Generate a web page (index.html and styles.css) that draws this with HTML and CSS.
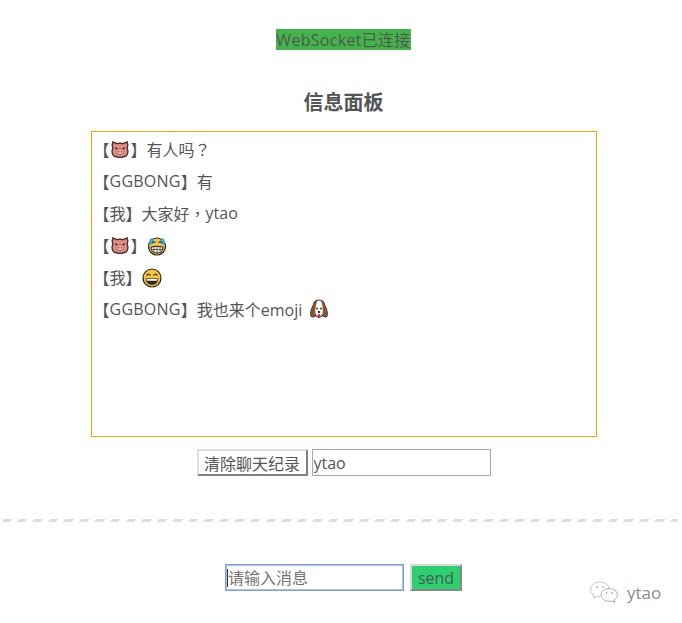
FILE: index.html
```html
<!DOCTYPE html>
<html lang="en">
<head>
    <meta charset="UTF-8">
    <title>WebSocket</title>
    <link rel="stylesheet" href="styles.css">
</head>
<body>
    <svg class="defs" width="0" height="0">
        <defs>
            <symbol id="pig" viewBox="0 0 20 20">
                <g transform="translate(1 1) scale(.9)">
                    <path d="M2 1 L6.500 3 Q10 2 13.500 3 L18 1 Q19.500 5 18 8 Q20 12.500 17 16.500 Q10 20 3 16.500 Q0 12.500 2 8 Q0.500 5 2 1Z" fill="#ea8a80" stroke="#3c3030" stroke-width="1.500"/>
                    <ellipse cx="10" cy="12" rx="4.500" ry="3" fill="#f6b8b0" stroke="#8a4a44" stroke-width=".8"/>
                    <circle cx="8.400" cy="12" r=".9" fill="#6b2d2d"/>
                    <circle cx="11.600" cy="12" r=".9" fill="#6b2d2d"/>
                    <circle cx="5.800" cy="8" r="1.100" fill="#222"/>
                    <circle cx="14.200" cy="8" r="1.100" fill="#222"/>
                </g>
            </symbol>
            <symbol id="tears" viewBox="0 0 20 20">
                <circle cx="10" cy="10.500" r="8.500" fill="#f5c33b" stroke="#222" stroke-width="1.200"/>
                <path d="M4 11 Q10 9.500 16 11 Q16 17 10 17 Q4 17 4 11Z" fill="#fff" stroke="#222"/>
                <path d="M7 10.500V16.500M10 10V17M13 10.500V16.500M4.500 13.500H15.500" stroke="#222" stroke-width=".7"/>
                <path d="M3 9 Q1 5 4 2 L8 6 Q6 8 3 9ZM17 9 Q19 5 16 2 L12 6 Q14 8 17 9Z" fill="#35a9e0"/>
                <path d="M5 6.500 Q7 5 8.500 6.500M11.500 6.500 Q13 5 15 6.500" fill="none" stroke="#222" stroke-width="1"/>
            </symbol>
            <symbol id="grin" viewBox="0 0 20 20">
                <circle cx="10" cy="10" r="9" fill="#f5c33b" stroke="#222" stroke-width="1.200"/>
                <path d="M4.500 7.500 Q6.500 5 8.500 7.500M11.500 7.500 Q13.500 5 15.500 7.500" fill="none" stroke="#222" stroke-width="1.200"/>
                <path d="M4 10.500 H16 Q15.500 16.500 10 16.500 Q4.500 16.500 4 10.500Z" fill="#3a2020" stroke="#222" stroke-width=".6"/>
                <path d="M4.500 10.800 H15.500 L15 12.800 H5Z" fill="#fff"/>
            </symbol>
            <symbol id="dog" viewBox="0 0 20 20">
                <path d="M10 1 Q15 1 16 7 Q19 12 18 17 Q15 19 13.500 16 Q12 18.500 10 18.500 Q8 18.500 6.500 16 Q5 19 2 17 Q1 12 4 7 Q5 1 10 1Z" fill="#fff" stroke="#222" stroke-width="1.100"/>
                <path d="M8.500 1.500 Q4.500 2 4 7 Q1 12 2.200 16.800 Q5 18.500 6.500 15 Q5.500 9 8.500 1.500Z" fill="#8a5230"/>
                <path d="M12 1.500 Q15.500 2 16 7 Q19 12 17.800 16.800 Q15 18.500 13.500 15 Q14.500 9 12 1.500Z" fill="#8a5230"/>
                <circle cx="8" cy="9.500" r=".9" fill="#222"/>
                <circle cx="12" cy="9.500" r=".9" fill="#222"/>
                <ellipse cx="10" cy="13" rx="1.300" ry="1" fill="#222"/>
                <ellipse cx="10" cy="16.500" rx="1.500" ry="1.500" fill="#d8232a"/>
            </symbol>
        </defs>
    </svg>

    <div class="status-row">
        <span class="status">WebSocket已连接</span>
    </div>
    <h3 class="title">信息面板</h3>
    <div class="panel">
        <p class="msg">【<svg class="emoji"><use href="#pig"/></svg>】有人吗<span class="punct">？</span></p>
        <p class="msg">【<span class="sender">GGBONG</span>】有</p>
        <p class="msg">【我】大家好<span class="punct">，</span>ytao</p>
        <p class="msg">【<svg class="emoji"><use href="#pig"/></svg>】<svg class="emoji"><use href="#tears"/></svg></p>
        <p class="msg">【我】<svg class="emoji"><use href="#grin"/></svg></p>
        <p class="msg">【<span class="sender">GGBONG</span>】我也来个emoji <svg class="emoji dog"><use href="#dog"/></svg></p>
    </div>
    <div class="controls">
        <button class="clear-btn">清除聊天纪录</button>
        <input class="name-input" type="text" value="ytao">
    </div>
    <div class="divider"></div>
    <div class="send-row">
        <span class="msg-wrap">
            <input class="msg-input" type="text" placeholder="请输入消息">
        </span>
        <button class="send-btn">send</button>
    </div>

    <div class="watermark">
        <svg class="wechat" viewBox="0 0 32 24">
            <path d="M11 2 C5.500 2 1.500 5.500 1.500 9.500 C1.500 12 3 14 5 15.300 L4.200 18 L7.500 16.400 C8.500 16.700 9.500 16.800 11 16.800" fill="none" stroke="#c4c4c4" stroke-width="1"/>
            <path d="M11 2 C15.500 2 19.500 4.500 20.300 8" fill="none" stroke="#c4c4c4" stroke-width="1"/>
            <path d="M20 8.500 C15.500 8.500 12 11.500 12 15 C12 18.500 15.500 21.300 20 21.300 C21 21.300 22 21.200 23 20.800 L26 22.500 L25.300 19.700 C27.200 18.500 28.500 16.800 28.500 15 C28.500 11.500 24.800 8.500 20 8.500Z" fill="none" stroke="#aaa" stroke-width="1"/>
            <circle cx="8" cy="7" r="1" fill="#bbb"/>
            <circle cx="14" cy="7" r="1" fill="#bbb"/>
            <circle cx="17.500" cy="13" r=".9" fill="#aaa"/>
            <circle cx="23" cy="13" r=".9" fill="#aaa"/>
        </svg>
        <span>ytao</span>
    </div>
</body>
</html>
```

FILE: styles.css
```css
body {
    font-family: "Open Sans", "Noto Sans CJK SC", sans-serif;
    font-size: 16px;
    color: #555;
    background-color: #fff;
    margin: 0;
    padding: 0 0 0 5px;
    text-align: center;
}
.defs {
    display: block;
    height: 0;
}
.status-row {
    padding-top: 29px;
    height: 21px;
}
.status {
    display: inline-block;
    background-color: #41b54a;
    width: 135px;
    height: 21px;
    line-height: 22px;
    white-space: nowrap;
    letter-spacing: 0.3px;
    vertical-align: top;
}
.title {
    font-size: 20px;
    line-height: 26px;
    font-weight: bold;
    margin: 40px 0 15px;
}
.panel {
    box-sizing: border-box;
    width: 506px;
    height: 306px;
    margin: 0 auto;
    padding: 1px 2px;
    border: 1px solid orange;
    text-align: left;
}
.msg {
    display: flex;
    align-items: center;
    height: 32px;
    margin: 0;
    white-space: pre;
}
.sender {
    letter-spacing: .25px;
}
.punct {
    font-family: "Noto Sans CJK TC", sans-serif;
}
.emoji {
    width: 20px;
    height: 20px;
    margin: 2px .5px 0;
}
.dog {
    margin-left: 3px;
    margin-top: 0;
}
.controls {
    display: flex;
    justify-content: center;
    gap: 4px;
    margin-top: 12px;
    height: 27px;
}
.clear-btn {
    box-sizing: border-box;
    width: 111px;
    height: 27px;
    padding: 0;
    font: inherit;
    color: #555;
    background-color: #fff;
    border: 2px solid;
    border-color: #e0e0e0 #808080 #808080 #e0e0e0;
}
.name-input {
    box-sizing: border-box;
    width: 179px;
    height: 27px;
    padding: 0 1px;
    font: inherit;
    color: #555;
    border: 1px solid #a9a9a9;
}
.divider {
    height: 3px;
    margin: 43px 4px 0 -2px;
    background-image: repeating-linear-gradient(-45deg, #ddd 0, #ddd 6px, #fff 6px, #fff 11px);
}
.send-row {
    display: flex;
    justify-content: center;
    align-items: center;
    gap: 6px;
    margin-top: 42px;
}
.msg-wrap {
    position: relative;
    display: block;
    height: 27px;
}
/* text cursor sitting in the focused field */
.msg-wrap::after {
    content: "";
    position: absolute;
    left: 2px;
    top: 5px;
    width: 1px;
    height: 18px;
    background-color: #333;
}
.msg-input {
    box-sizing: border-box;
    display: block;
    width: 179px;
    height: 27px;
    padding: 0 1px 0 2px;
    font: inherit;
    color: #555;
    border: 1px solid #7c9fe0;
    box-shadow: inset 0 0 0 1px #a9c0ec;
    outline: none;
}
.msg-input::placeholder {
    color: #757575;
}
.send-btn {
    box-sizing: border-box;
    width: 52px;
    height: 27px;
    padding: 0;
    font: inherit;
    color: #555;
    background-color: #2bd06f;
    border: 2px solid;
    border-color: #d8d8d8 #888 #888 #d8d8d8;
}
.watermark {
    position: absolute;
    left: 589px;
    top: 580px;
    display: flex;
    align-items: center;
    gap: 6px;
    color: #8c8c8c;
    font-size: 17px;
}
.wechat {
    width: 32px;
    height: 24px;
}
```
